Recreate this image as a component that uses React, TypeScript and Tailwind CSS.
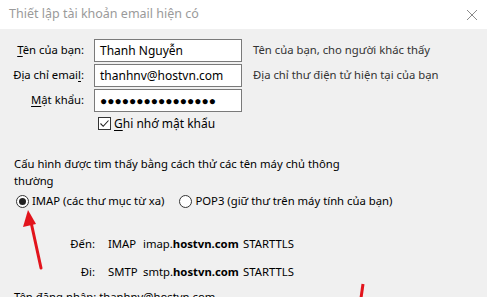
import React from "react";

const font = { fontFamily: '"Noto Sans", "Open Sans", sans-serif' };

function Field({ label, u, rest, value, hint }: { label: string; u: string; rest: string; value: string; hint?: string }) {
  const idx = label.indexOf(u);
  return (
    <div className="flex items-center h-[25px]">
      <div className="w-[86px] text-right pr-[2px]">
        {label.slice(0, idx)}
        <span className="underline underline-offset-2">{u}</span>
        {label.slice(idx + u.length)}
        {rest}
      </div>
      <div className="ml-[8px] w-[148px] h-[23px] bg-white border border-[#7a7a7a] flex items-center px-[5px] text-[12px] text-[#000]">
        {value}
      </div>
      {hint && <div className="ml-[11px] text-[#333]">{hint}</div>}
    </div>
  );
}

export default function App() {
  return (
    <div className="relative w-[487px] h-[297px] overflow-hidden bg-[#f0f0f0] text-[11.3px] text-[#000]" style={font}>
      {/* title bar */}
      <div className="h-[29px] bg-white flex items-center justify-between pl-[9px] pr-[8px]">
        <span className="text-[#9a9a9a] text-[12.5px]">Thiết lập tài khoản email hiện có</span>
        <svg width="12" height="12" viewBox="0 0 12 12" className="mr-[1px]">
          <path d="M1 1L11 11M11 1L1 11" stroke="#8a8a8a" strokeWidth="1" />
        </svg>
      </div>

      <div className="pt-[9px]">
        <Field label="Tên của bạn" u="T" rest=":" value="Thanh Nguyễn" hint="Tên của bạn, cho người khác thấy" />
        <Field label="Địa chỉ email" u="l" rest=":" value="thanhnv@hostvn.com" hint="Địa chỉ thư điện tử hiện tại của bạn" />
        <Field label="Mật khẩu" u="M" rest=":" value="●●●●●●●●●●●●●●●●" />
        <div className="flex items-center ml-[98px] mt-[2px] h-[17px]">
          <div className="w-[13px] h-[13px] border border-[#333] bg-white flex items-center justify-center">
            <svg width="11" height="11" viewBox="0 0 11 11">
              <path d="M1.5 5.5L4.2 8.3L9.5 2.5" stroke="#222" strokeWidth="1.1" fill="none" />
            </svg>
          </div>
          <span className="ml-[3px] text-[12px]">
            <span className="underline underline-offset-2">G</span>hi nhớ mật khẩu
          </span>
        </div>

        <div className="mt-[23px] ml-[14px] leading-[17px] w-[345px]">
          Cấu hình được tìm thấy bằng cách thử các tên máy chủ thông thường
        </div>

        <div className="mt-[4px] ml-[16px] flex items-center h-[17px]">
          <div className="w-[13px] h-[13px] rounded-full border border-[#333] bg-white flex items-center justify-center">
            <div className="w-[7px] h-[7px] rounded-full bg-[#222]" />
          </div>
          <span className="ml-[3px]">IMAP (các thư mục từ xa)</span>
          <div className="ml-[15px] w-[13px] h-[13px] rounded-full border border-[#333] bg-white" />
          <span className="ml-[3px]">POP3 (giữ thư trên máy tính của bạn)</span>
        </div>

        <div className="mt-[25px] flex flex-col gap-[10px]">
          {[
            ["Đến:", "IMAP", "imap."],
            ["Đi:", "SMTP", "smtp."],
          ].map(([a, b, c]) => (
            <div key={a} className="flex items-center h-[18px]">
              <div className="w-[95px] text-right">{a}</div>
              <div className="ml-[13px] w-[35px]">{b}</div>
              <div className="w-[100px]">
                {c}
                <span className="font-bold">hostvn.com</span>
              </div>
              <div>STARTTLS</div>
            </div>
          ))}
        </div>

        <div className="mt-[8px] ml-[14px]">Tên đăng nhập: thanhnv@hostvn.com</div>
      </div>

      {/* annotation arrows */}
      <svg className="absolute left-0 top-0 pointer-events-none" width="487" height="297">
        <path d="M41 268L31 222" stroke="#e2141c" strokeWidth="3" strokeLinecap="round" />
        <path d="M28 210L23 227L36 224Z" fill="#e2141c" />
        <path d="M363 284L361 298" stroke="#e2141c" strokeWidth="3" />
      </svg>
    </div>
  );
}
